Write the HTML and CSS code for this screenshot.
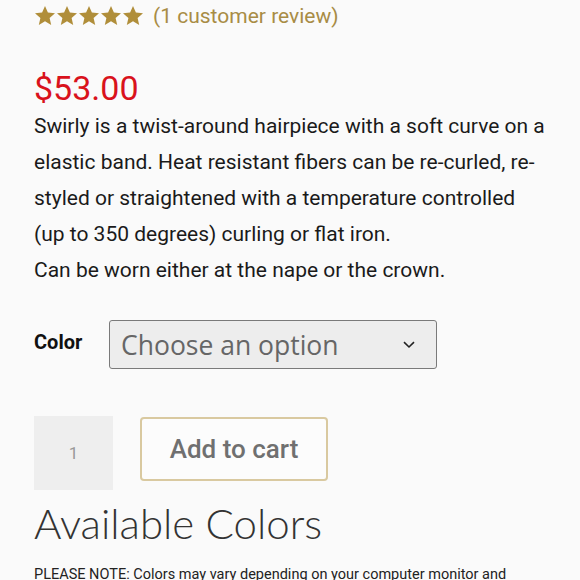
FILE: index.html
```html
<!DOCTYPE html>
<html lang="en">
<head>
  <meta charset="UTF-8">
  <meta name="viewport" content="width=device-width, initial-scale=1">
  <title>Swirly</title>
  <link rel="stylesheet" href="styles.css">
</head>
<body>
  <div class="summary">
    <!-- Rating -->
    <div class="rating">
      <span class="stars">
        <svg viewBox="0 0 110 22" width="110" height="22">
          <defs>
            <path id="star" d="M11 1l2.9 6.5 7.1.7-5.4 4.7 1.6 7L11 16.2l-6.2 3.7 1.6-7L1 8.2l7.1-.7z"/>
          </defs>
          <use href="#star" x="0"/>
          <use href="#star" x="22"/>
          <use href="#star" x="44"/>
          <use href="#star" x="66"/>
          <use href="#star" x="88"/>
        </svg>
      </span>
      <a class="review-link" href="#reviews">(1 customer review)</a>
    </div>

    <p class="price">$53.00</p>

    <div class="description">
      <p>Swirly is a twist-around hairpiece with a soft curve on a elastic band. Heat resistant fibers can be re-curled, re-styled or straightened with a temperature controlled (up to 350 degrees) curling or flat iron.</p>
      <p>Can be worn either at the nape or the crown.</p>
    </div>

    <div class="variations">
      <label class="variation-label" for="color">Color</label>
      <div class="select-wrap">
        <select id="color">
          <option>Choose an option</option>
        </select>
        <svg class="chevron" viewBox="0 0 12 8" width="12" height="8">
          <path d="M1 1.2l5 4.8 5-4.8" fill="none" stroke="#222" stroke-width="1.6"/>
        </svg>
      </div>
    </div>

    <form class="cart">
      <input class="qty" type="number" value="1" min="1">
      <button type="button" class="add-to-cart">Add to cart</button>
    </form>

    <h2 class="section-title">Available Colors</h2>
    <p class="note">PLEASE NOTE: Colors may vary depending on your computer monitor and settings.</p>
  </div>
</body>
</html>
```

FILE: styles.css
```css
/* Reset */
*, *::before, *::after { margin: 0; padding: 0; box-sizing: border-box; }
body {
  font-family: Roboto, 'Liberation Sans', sans-serif;
  background: #fafafa;
  color: #1a1a1a;
  overflow: hidden;
}
.summary {
  width: 548px;
  padding-left: 34px;
}
/* Rating */
.rating {
  display: flex;
  align-items: center;
  gap: 9px;
  height: 32px;
}
.stars svg {
  display: block;
  fill: #b08e3a;
}
.review-link {
  font-size: 21px;
  color: #a88c45;
  text-decoration: none;
}
/* Price */
.price {
  margin-top: 36px;
  font-size: 34px;
  line-height: 40px;
  color: #d9121c;
}
/* Description */
.description {
  font-size: 21px;
  line-height: 36px;
  color: #1a1a1a;
}
/* Variations */
.variations {
  display: flex;
  align-items: center;
  margin-top: 32px;
}
.variation-label {
  width: 75px;
  font-size: 20px;
  font-weight: 700;
  color: #111;
  margin-top: -6px;
}
.select-wrap {
  position: relative;
}
.select-wrap select {
  appearance: none;
  -webkit-appearance: none;
  width: 328px;
  height: 49px;
  padding: 0 40px 0 11px;
  background: #ededed;
  border: 1px solid #7a7a7a;
  border-radius: 3px;
  font-family: 'Open Sans', sans-serif;
  font-size: 26.5px;
  color: #666;
}
.chevron {
  position: absolute;
  right: 22px;
  top: 21px;
  pointer-events: none;
}
/* Cart */
.cart {
  display: flex;
  align-items: flex-start;
  gap: 27px;
  margin-top: 47px;
}
.qty {
  width: 79px;
  height: 74px;
  border: none;
  background: #eeeeee;
  text-align: center;
  font-family: Roboto, sans-serif;
  font-size: 17px;
  color: #999;
  -moz-appearance: textfield;
}
.qty::-webkit-inner-spin-button,
.qty::-webkit-outer-spin-button { -webkit-appearance: none; }
.add-to-cart {
  width: 188px;
  height: 64px;
  margin-top: 1px;
  background: #fcfcfc;
  border: 2px solid #d9c9a0;
  border-radius: 4px;
  font-family: Roboto, sans-serif;
  font-size: 26px;
  font-weight: 500;
  color: #707070;
}
/* Available colors */
.section-title {
  margin-top: 9px;
  font-family: Lato, sans-serif;
  font-weight: 300;
  font-size: 42px;
  line-height: 48px;
  color: #333;
}
.note {
  margin-top: 19px;
  font-size: 14.5px;
  color: #222;
}
```
